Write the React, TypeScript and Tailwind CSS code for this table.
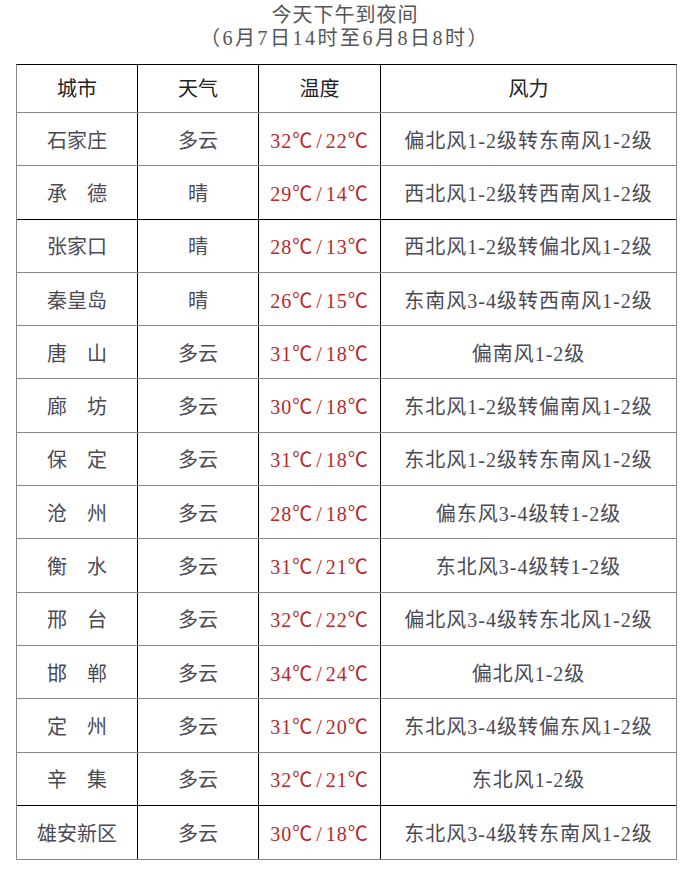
import React from "react";

type Row = { city: string; weather: string; temp: string; wind: string; dark?: boolean };

const rows: Row[] = [
  { city: "石家庄", weather: "多云", temp: "32℃/22℃", wind: "偏北风1-2级转东南风1-2级" },
  { city: "承　德", weather: "晴", temp: "29℃/14℃", wind: "西北风1-2级转西南风1-2级", dark: true },
  { city: "张家口", weather: "晴", temp: "28℃/13℃", wind: "西北风1-2级转偏北风1-2级" },
  { city: "秦皇岛", weather: "晴", temp: "26℃/15℃", wind: "东南风3-4级转西南风1-2级" },
  { city: "唐　山", weather: "多云", temp: "31℃/18℃", wind: "偏南风1-2级" },
  { city: "廊　坊", weather: "多云", temp: "30℃/18℃", wind: "东北风1-2级转偏南风1-2级" },
  { city: "保　定", weather: "多云", temp: "31℃/18℃", wind: "东北风1-2级转东南风1-2级" },
  { city: "沧　州", weather: "多云", temp: "28℃/18℃", wind: "偏东风3-4级转1-2级" },
  { city: "衡　水", weather: "多云", temp: "31℃/21℃", wind: "东北风3-4级转1-2级" },
  { city: "邢　台", weather: "多云", temp: "32℃/22℃", wind: "偏北风3-4级转东北风1-2级" },
  { city: "邯　郸", weather: "多云", temp: "34℃/24℃", wind: "偏北风1-2级" },
  { city: "定　州", weather: "多云", temp: "31℃/20℃", wind: "东北风3-4级转偏东风1-2级" },
  { city: "辛　集", weather: "多云", temp: "32℃/21℃", wind: "东北风1-2级", dark: true },
  { city: "雄安新区", weather: "多云", temp: "30℃/18℃", wind: "东北风3-4级转东南风1-2级" },
];

const font = { fontFamily: '"Liberation Serif", "Noto Sans CJK SC", serif' };

function Temp({ t }: { t: string }) {
  const [a, b] = t.split("/");
  return (
    <span className="tracking-[1px]">
      {a}
      <span className="px-[3px]">/</span>
      {b}
    </span>
  );
}

export default function App() {
  return (
    <div className="w-[690px] h-[892px] bg-white text-[#4a4a55]" style={font}>
      <div className="pt-[4px] text-center text-[20px] leading-[23px] text-[#555]">
        <div className="tracking-[1px]">今天下午到夜间</div>
        <div className="tracking-[2.5px]">（6月7日14时至6月8日8时）</div>
      </div>
      <div className="mt-[14px] ml-[16px] w-[661px] border-t-[1.5px] border-t-black border-l border-l-[#888] border-r border-r-[#888] border-b border-b-[#888]">
        <div className="flex h-[48px] border-b border-b-[#888] text-[20px] text-[#222]">
          <div className="w-[121px] flex items-center justify-center border-r-[1.5px] border-r-black">城市</div>
          <div className="w-[121px] flex items-center justify-center border-r-[1.5px] border-r-black">天气</div>
          <div className="w-[122px] flex items-center justify-center border-r-[1.5px] border-r-black">温度</div>
          <div className="flex-1 flex items-center justify-center">风力</div>
        </div>
        {rows.map((r, i) => (
          <div
            key={i}
            className={
              "flex h-[53.3px] text-[20px] " +
              (i === rows.length - 1
                ? ""
                : r.dark
                ? "border-b-[1.5px] border-b-black"
                : "border-b border-b-[#888]")
            }
          >
            <div className="w-[121px] flex items-center justify-center pt-[3px] border-r-[1.5px] border-r-black whitespace-pre">
              {r.city}
            </div>
            <div className="w-[121px] flex items-center justify-center pt-[3px] border-r-[1.5px] border-r-black">
              {r.weather}
            </div>
            <div className="w-[122px] flex items-center justify-center pt-[3px] border-r-[1.5px] border-r-black text-[#b8282a]">
              <Temp t={r.temp} />
            </div>
            <div className="flex-1 flex items-center justify-center pt-[3px] tracking-[1px]">{r.wind}</div>
          </div>
        ))}
      </div>
    </div>
  );
}
